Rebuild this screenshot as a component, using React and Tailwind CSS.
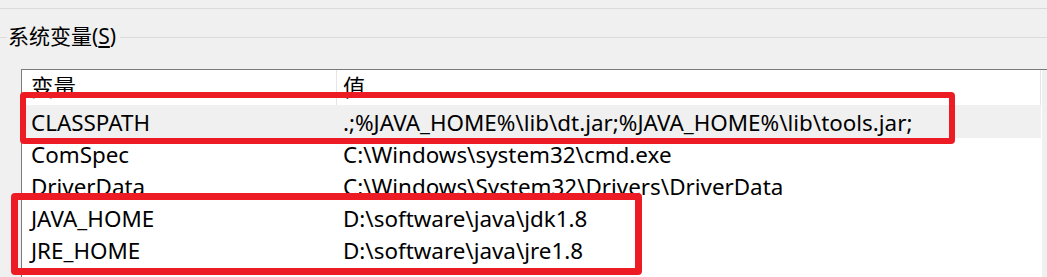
import React from "react";

const rows = [
  { name: "CLASSPATH", value: ".;%JAVA_HOME%\\lib\\dt.jar;%JAVA_HOME%\\lib\\tools.jar;", selected: true },
  { name: "ComSpec", value: "C:\\Windows\\system32\\cmd.exe" },
  { name: "DriverData", value: "C:\\Windows\\System32\\Drivers\\DriverData" },
  { name: "JAVA_HOME", value: "D:\\software\\java\\jdk1.8" },
  { name: "JRE_HOME", value: "D:\\software\\java\\jre1.8" },
  { name: "", value: "" },
];

const font = { fontFamily: '"Noto Sans", "Noto Sans CJK SC", sans-serif' };

const App = () => {
  return (
    <div
      className="relative flex flex-col w-[1047px] h-[277px] overflow-hidden bg-[#f0f0f0] text-black"
      style={font}
    >
      {/* top separator */}
      <div className="h-[8px] shrink-0" />
      <div className="h-px shrink-0 bg-[#dadada]" />

      {/* group label */}
      <div className="flex shrink-0 items-center h-[60px] text-[21px]">
        <div className="w-[7px] h-px bg-[#dcdcdc] -mt-[3px]" />
        <span className="px-[1px] leading-none -mt-[5px]">
          系统变量(<span className="underline underline-offset-2">S</span>)
        </span>
        <div className="flex-1 h-px bg-[#dcdcdc] ml-[3px] -mt-[3px]" />
      </div>

      {/* list */}
      <div className="ml-[21px] flex-1 min-h-0 flex border-t border-l border-[#7a7a7a] bg-white text-[22.4px]">
        <div className="flex-1 flex flex-col">
          <div className="flex shrink-0 h-[36px] border-b border-[#f0f0f0]">
            <div className="w-[315px] pl-[9px] pt-[3px] leading-[30px] border-r border-[#e5e5e5]">变量</div>
            <div className="flex-1 pl-[6px] pt-[3px] leading-[30px] border-r border-[#e5e5e5]">值</div>
          </div>
          {rows.map((row, i) => (
            <div
              key={i}
              className={`flex shrink-0 h-[32px] items-center leading-[30px] pt-[2px] ${row.selected ? "bg-[#f0f0f0]" : ""}`}
            >
              <div className="w-[315px] pl-[9px] whitespace-nowrap">{row.name}</div>
              <div className="flex-1 pl-[6px] whitespace-nowrap">{row.value}</div>
            </div>
          ))}
        </div>
        <div className="w-[5px] ml-[1px] bg-[#f0f0f0]" />
      </div>

      {/* annotation boxes */}
      <div className="absolute left-[20px] top-[92px] w-[935px] h-[52px] border-[6px] border-[#ed1c24] rounded-[4px]" />
      <div className="absolute left-[11px] top-[193px] w-[631px] h-[82px] border-[7px] border-[#ed1c24] rounded-[4px]" />
    </div>
  );
};

export default App;
